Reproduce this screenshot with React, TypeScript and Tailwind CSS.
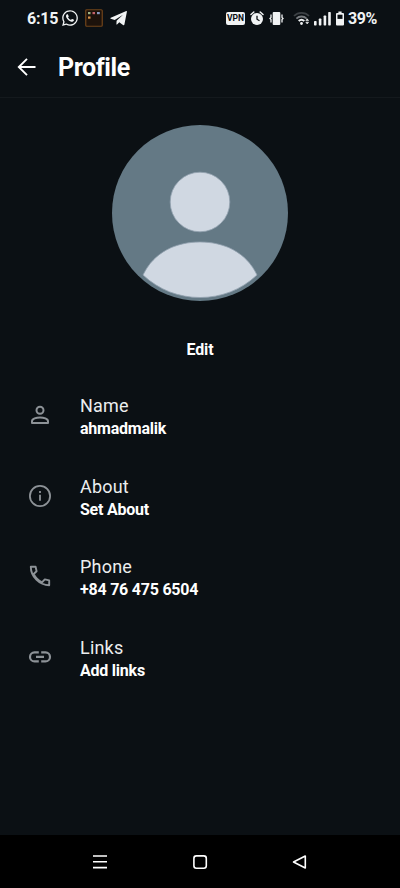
import React from 'react';
import { FaWhatsapp } from 'react-icons/fa';

const StatusBar: React.FC = () => {
  return (
    <div className="flex h-9 shrink-0 items-center justify-between pl-[27px] pr-[21px] text-base font-bold leading-none tracking-[-0.2px] text-[#f1f3f4]">
      <div className="flex items-center">
        <span className="w-[31px] whitespace-nowrap pt-px">6:15</span>
        <FaWhatsapp className="ml-[3px] size-[18px]" />
        <svg className="ml-[6px]" width="18" height="18" viewBox="0 0 18 18">
          <rect x="0.75" y="0.75" width="16.5" height="16.5" rx="1" fill="#1c120b" stroke="#70441a" strokeWidth="1.2" />
          <rect x="3" y="3" width="2.5" height="2.2" fill="#9db486" />
          <rect x="7.5" y="3" width="2.5" height="2.2" fill="#c4626a" />
          <rect x="12" y="3" width="2.8" height="2.2" fill="#8798c0" />
          <rect x="3" y="7.5" width="2.5" height="2.2" fill="#d9934a" />
        </svg>
        <svg className="ml-[7px]" width="17" height="16" viewBox="0 0 17 16" fill="currentColor">
          <path d="M16.3 1 0.8 7.8c-.6.3-.6.8 0 1L4.7 10 13 4.7 6.6 10.8 6.4 14.6c.4 0 .6-.2.9-.4l2-1.9 3.7 2.7c.7.4 1.2.2 1.4-.6L16.9 1.8c.1-.7-.1-1-.6-.8Z" />
        </svg>
      </div>
      <div className="flex items-center">
        <span className="flex h-[13px] w-[19px] items-center justify-center rounded-[2px] bg-[#f1f3f4] text-[8.5px] tracking-normal text-[#0b1014]">
          VPN
        </span>
        <svg className="ml-[5px]" width="14" height="15" viewBox="0 0 14 15">
          <path d="M1 3.5 3.8 1M10.2 1 13 3.5" stroke="currentColor" strokeWidth="1.5" strokeLinecap="round" />
          <circle cx="7" cy="8" r="6" fill="currentColor" />
          <path d="M7 4.7V8.2l2.5 1.5" fill="none" stroke="#0b1014" strokeWidth="1.3" />
        </svg>
        <svg className="ml-[5px]" width="15" height="15" viewBox="0 0 15 15">
          <rect x="3.7" y="1" width="7.6" height="13" rx="1" fill="currentColor" />
          <path d="M2 3.5v3l-1 1 1 1v3M13 3.5v3l1 1-1 1v3" fill="none" stroke="currentColor" strokeWidth="1.3" />
        </svg>
        <svg className="ml-[9px]" width="18" height="15" viewBox="0 0 18 15" fill="none">
          <path d="M1 5C5 .8 12 .8 16 5" stroke="#3c4145" strokeWidth="1.8" />
          <path d="M3.4 7.6c2.8-2.8 7.4-2.8 10.2 0" stroke="#777b7f" strokeWidth="1.8" />
          <path d="M5.7 10c1.6-1.5 4-1.5 5.6 0" stroke="currentColor" strokeWidth="2" />
          <circle cx="8.5" cy="12.5" r="1.4" fill="currentColor" />
          <path d="m12.8 9.6 1.4-1.8 1.4 1.8ZM12.8 11.2l1.4 1.8 1.4-1.8Z" fill="currentColor" stroke="currentColor" strokeWidth=".6" />
        </svg>
        <svg className="ml-[3px]" width="17" height="15" viewBox="0 0 17 15" fill="currentColor">
          <rect x="0" y="10" width="2.6" height="4.5" rx=".7" />
          <rect x="4.8" y="7.5" width="2.6" height="7" rx=".7" />
          <rect x="9.6" y="4.5" width="2.6" height="10" rx=".7" />
          <rect x="14.2" y="1" width="2.6" height="13.5" rx=".7" />
        </svg>
        <svg className="ml-[5px]" width="8" height="15" viewBox="0 0 8 15">
          <path d="M2.4 .5h3.2V2H7a1 1 0 0 1 1 1v10.5a1 1 0 0 1-1 1H1a1 1 0 0 1-1-1V3a1 1 0 0 1 1-1h1.4Z" fill="currentColor" />
          <rect x="1.5" y="3.7" width="5" height="4.2" fill="#0b1014" />
        </svg>
        <span className="ml-[4px] w-[31px] whitespace-nowrap pt-px tracking-[-0.4px]">39%</span>
      </div>
    </div>
  );
};

const Avatar: React.FC = () => {
  return (
    <svg className="mx-auto mt-[26px] block shrink-0" width="178" height="178" viewBox="0 0 178 178">
      <circle cx="89" cy="89" r="88" fill="#647985" />
      <circle cx="89" cy="78" r="29.8" fill="#d0d8e2" stroke="#93a2b0" strokeWidth="0.8" />
      <path
        d="M32 151C43 128 65 118 89 118s46 10 57 33C130 166 110 173.5 89 173.5S48 166 32 151Z"
        fill="#d0d8e2"
        stroke="#93a2b0"
        strokeWidth="0.8"
      />
    </svg>
  );
};

const PersonIcon = (
  <svg width="24" height="24" viewBox="0 0 24 24" fill="none" stroke="currentColor" strokeWidth="2">
    <circle cx="12" cy="7.2" r="3.5" />
    <path d="M4 19.9v-1.7c0-2.5 4.3-3.8 8-3.8s8 1.3 8 3.8v1.7Z" strokeLinejoin="round" />
  </svg>
);

const InfoIcon = (
  <svg width="24" height="24" viewBox="0 0 24 24" fill="none" stroke="currentColor" strokeWidth="1.8">
    <circle cx="12" cy="12" r="10.1" />
    <path d="M12 10.8v6M12 7v2" />
  </svg>
);

const PhoneIcon = (
  <svg width="24" height="24" viewBox="0 0 24 24" fill="none" stroke="currentColor" strokeWidth="1.9" strokeLinejoin="round">
    <path d="M2.8 2.8h4.8l1 4.4-3 2.8c1.8 3.6 4.6 6.6 8.4 8.4l2.8-3 4.4 1v4.8C11.4 21.2 2.8 12.6 2.8 2.8Z" />
  </svg>
);

const LinkIcon = (
  <svg width="24" height="24" viewBox="0 0 24 24" fill="none" stroke="currentColor" strokeWidth="2.2">
    <path d="M10.8 7.4H6.5a4.5 4.5 0 0 0 0 9h4.3M13.2 7.4h4.3a4.5 4.5 0 0 1 0 9h-4.3M8 11.9h8" />
  </svg>
);

const rows = [
  { label: 'Name', value: 'ahmadmalik', icon: PersonIcon },
  { label: 'About', value: 'Set About', icon: InfoIcon },
  { label: 'Phone', value: '+84 76 475 6504', icon: PhoneIcon },
  { label: 'Links', value: 'Add links', icon: LinkIcon },
];

const App: React.FC = () => {
  return (
    <div className="flex h-[888px] w-[400px] flex-col overflow-hidden bg-[#0b1014] font-['Roboto',sans-serif] text-white">
      <StatusBar />
      <header className="flex h-[62px] shrink-0 items-center border-b border-[#14191d] pl-[17px]">
        <svg width="20" height="20" viewBox="0 0 20 20" fill="none" stroke="currentColor" strokeWidth="1.9">
          <path d="M18.5 10H2M10 1.8 1.8 10l8.2 8.2" />
        </svg>
        <h1 className="ml-[21px] pt-[3px] text-[25px] font-bold leading-8 tracking-[-0.4px]">Profile</h1>
      </header>
      <main className="flex flex-1 flex-col">
        <Avatar />
        <button type="button" className="mx-auto mt-[37px] h-5 text-base font-bold leading-[21px] tracking-[-0.1px]">
          Edit
        </button>
        <div className="mt-[17.5px] flex flex-col">
          {rows.map((row) => (
            <div key={row.label} className="flex h-[80.5px] items-center">
              <div className="flex w-20 justify-center pb-[3px] text-[#8d9297]">{row.icon}</div>
              <div className="pt-[1.5px]">
                <p className="text-[18px] leading-[22px] tracking-[0.2px] text-[#eceeef]">{row.label}</p>
                <p className="text-base font-bold leading-[23px] tracking-[-0.23px]">{row.value}</p>
              </div>
            </div>
          ))}
        </div>
      </main>
      <nav className="flex h-[53px] shrink-0 items-center justify-between bg-black px-[92px]">
        <svg width="16" height="16" viewBox="0 0 16 16" stroke="currentColor" strokeWidth="1.6">
          <path d="M1 2h14M1 7.8h14M1 13.6h14" />
        </svg>
        <svg width="16" height="16" viewBox="0 0 16 16" fill="none" stroke="currentColor" strokeWidth="1.6">
          <rect x="1.9" y="1.9" width="12.4" height="12.4" rx="2.5" />
        </svg>
        <svg width="16" height="16" viewBox="0 0 16 16" fill="none" stroke="currentColor" strokeWidth="1.6" strokeLinejoin="round">
          <path d="M13.3 2v12L1.5 8Z" />
        </svg>
      </nav>
    </div>
  );
};

export default App;
